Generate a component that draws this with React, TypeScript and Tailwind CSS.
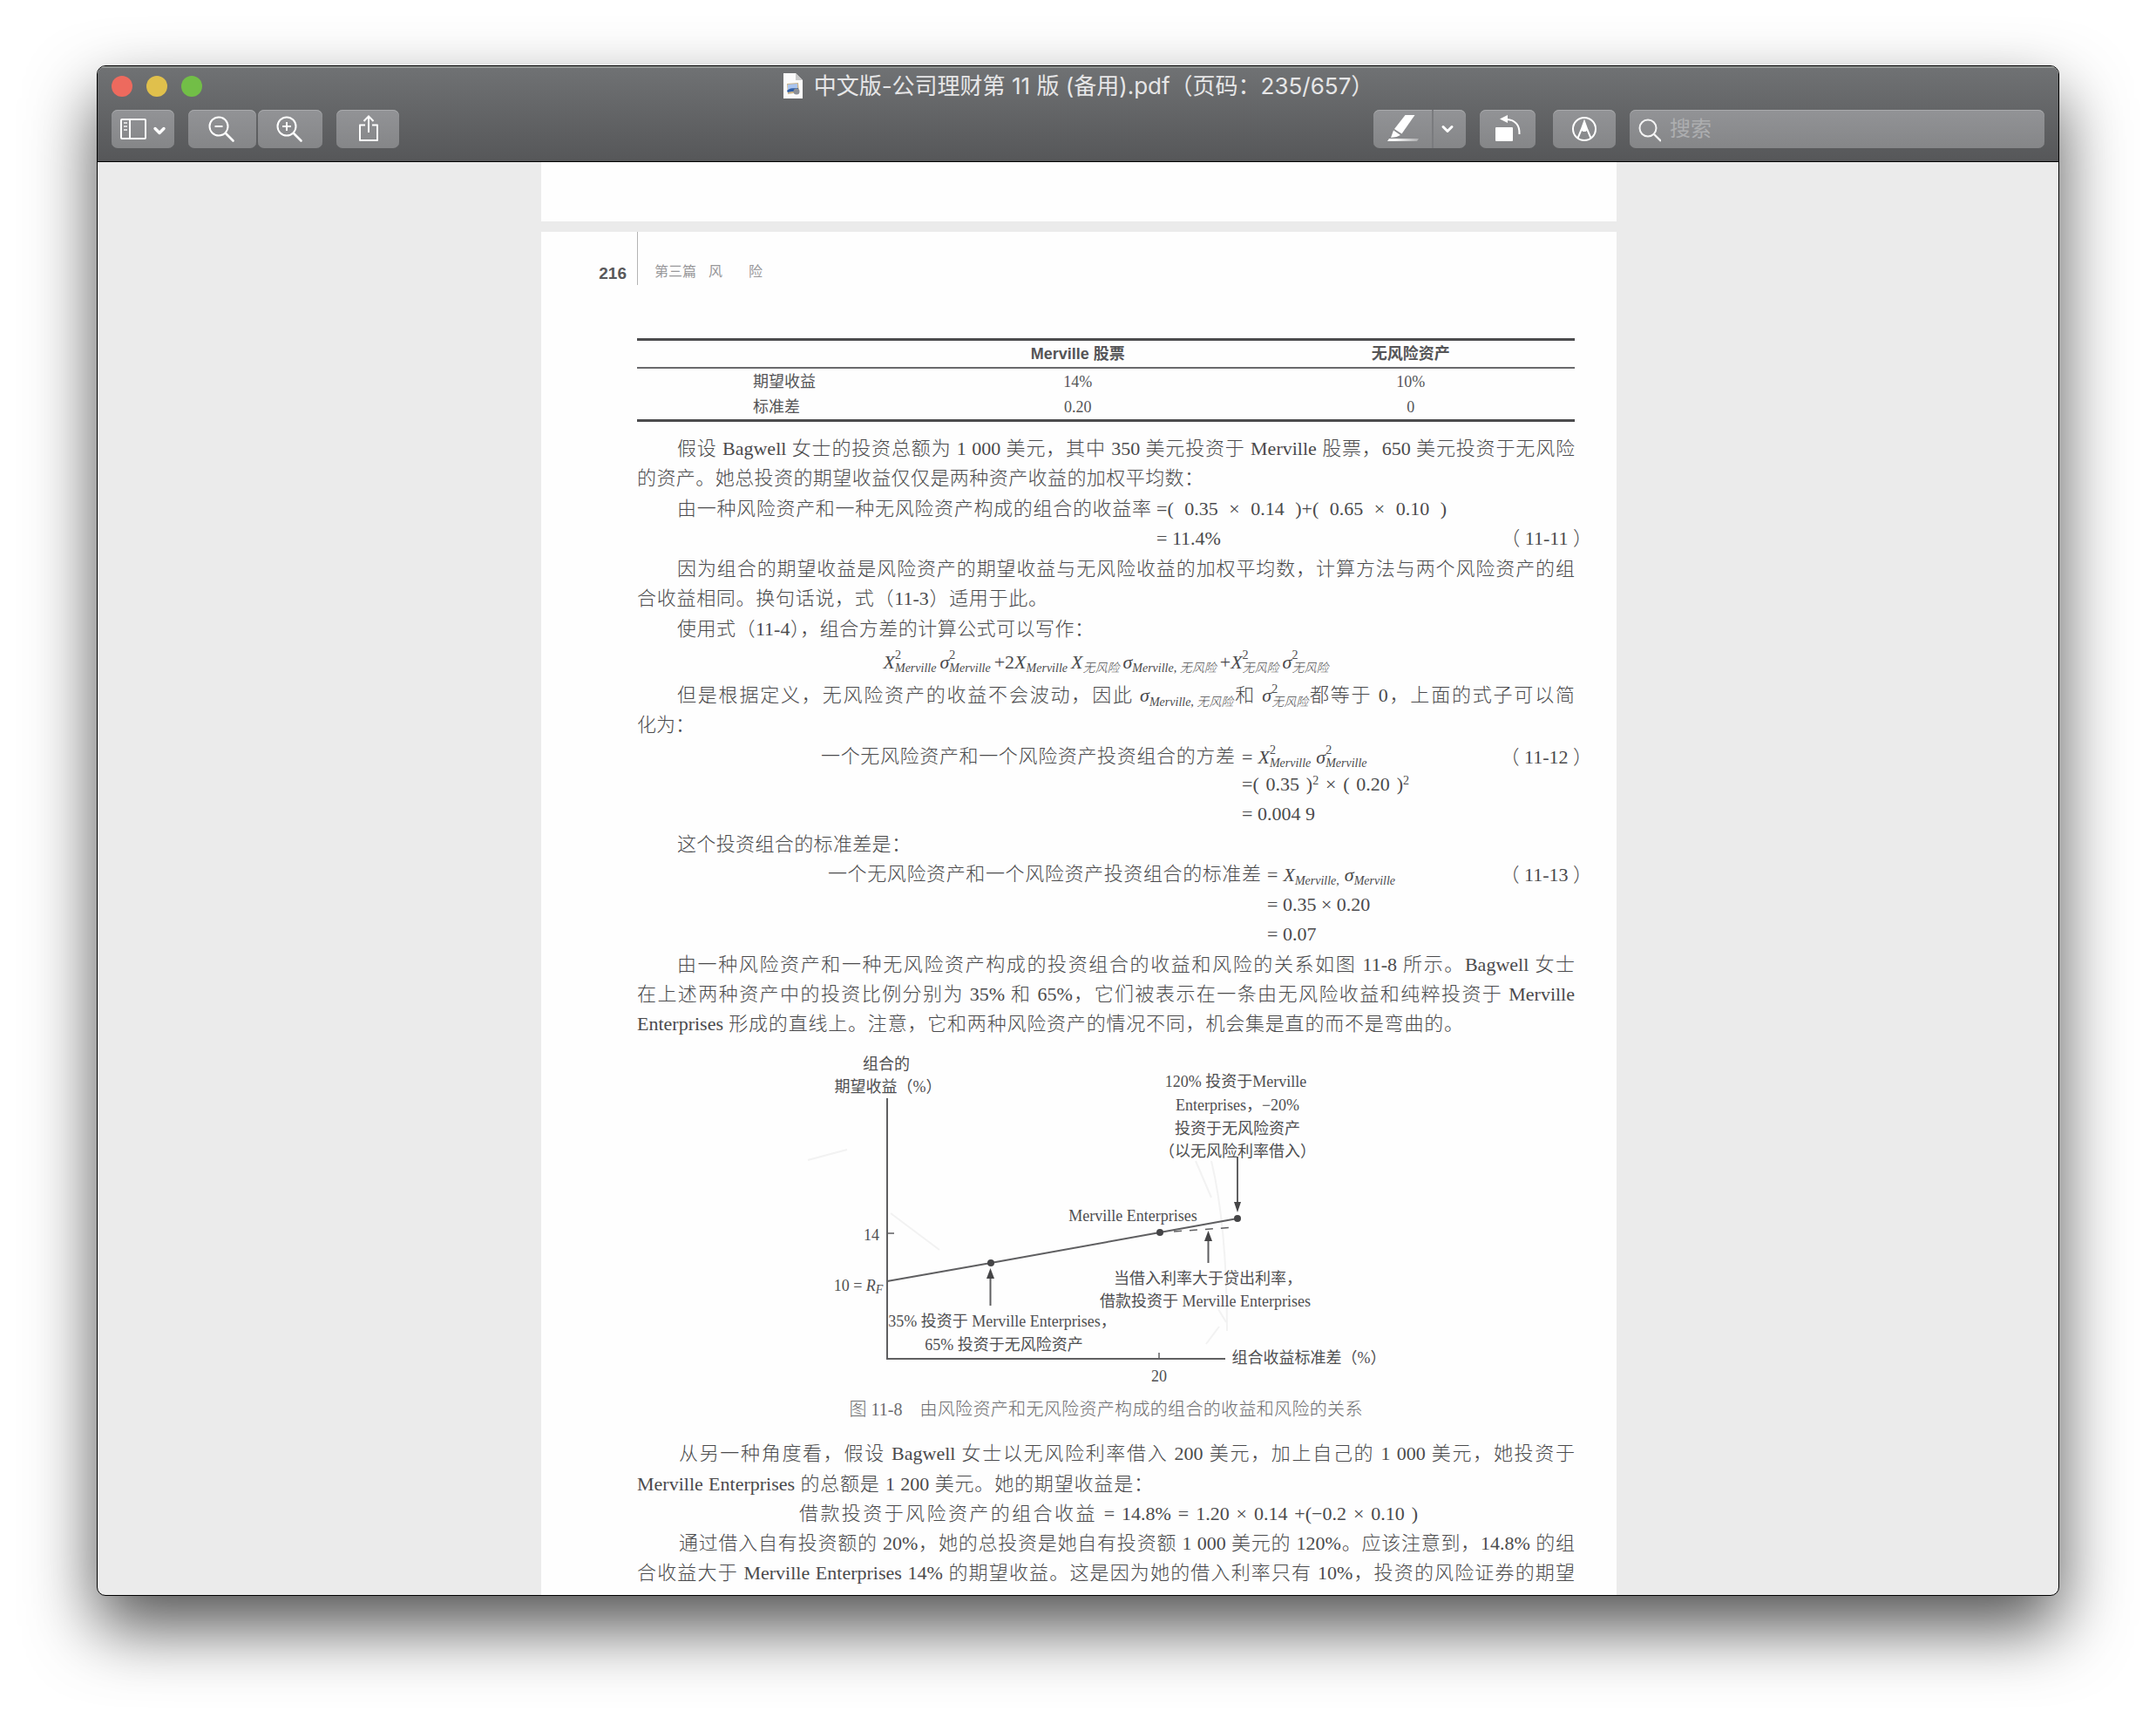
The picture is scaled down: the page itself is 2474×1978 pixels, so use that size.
import React from 'react';

const SERIF = "font-['Liberation_Serif','Noto_Sans_CJK_SC',serif]";
const SANS = "font-['Inter','Noto_Sans_CJK_SC',sans-serif]";
const BUTTON =
  'h-11 rounded-[7px] bg-linear-to-b from-[#929396] to-[#858688] shadow-[inset_0_1px_0_#a9aaac] flex shrink-0';

function Line({ children, className = '' }: { children: React.ReactNode; className?: string }) {
  return (
    <span className={`block h-[34px] leading-[34px] [text-align-last:justify] ${className}`}>{children}</span>
  );
}

function Sym({ base, sup = '', sub }: { base: string; sup?: string; sub: string }) {
  return (
    <span className="inline-flex items-center whitespace-nowrap">
      <i>{base}</i>
      <span className="flex flex-col text-left text-sm leading-[15px] [text-align-last:left]">
        <span className="h-[15px]">{sup}</span>
        <i className="h-[15px]">{sub}</i>
      </span>
    </span>
  );
}

function Toolbar() {
  return (
    <div className="flex items-center px-4 pb-[15px]">
      <button aria-label="边栏" className={`${BUTTON} w-[72px]`}>
        <svg width="72" height="44" fill="none" stroke="#fff" strokeWidth="2">
          <rect x="11" y="11" width="28" height="22" rx="1" />
          <path d="M21 11v22" />
          <path d="M14 15h4M14 19h4M14 23h4" strokeWidth="2" stroke="#dcdcdd" />
          <path d="M50 21.5l5 5 5-5" strokeWidth="3.4" strokeLinecap="round" strokeLinejoin="round" />
        </svg>
      </button>
      <div className="ml-4 flex gap-0.5">
        <button aria-label="缩小" className={`${BUTTON} w-[78px]`}>
          <svg width="78" height="44" fill="none" stroke="#fff" strokeWidth="2">
            <circle cx="35" cy="19" r="10.5" />
            <path d="M30.5 19h9" />
            <path d="M43 27l8.5 8.5" strokeWidth="2.6" strokeLinecap="round" />
          </svg>
        </button>
        <button aria-label="放大" className={`${BUTTON} w-[74px]`}>
          <svg width="74" height="44" fill="none" stroke="#fff" strokeWidth="2">
            <circle cx="33" cy="19" r="10.5" />
            <path d="M28 19h10M33 14v10" />
            <path d="M41 27l8.5 8.5" strokeWidth="2.6" strokeLinecap="round" />
          </svg>
        </button>
      </div>
      <button aria-label="共享" className={`${BUTTON} ml-4 w-[72px]`}>
        <svg width="72" height="44" fill="none" stroke="#fff" strokeWidth="2">
          <path d="M33 17.5h-6v17.5h20v-17.5h-6" strokeLinejoin="round" />
          <path d="M37 7.5v18.5" />
          <path d="M31.5 13l5.5-5.5 5.5 5.5" />
        </svg>
      </button>
      <div className="ml-auto flex">
        <button aria-label="高亮标记" className="flex h-11 w-[67px] rounded-l-[7px] bg-linear-to-b from-[#929396] to-[#858688] shadow-[inset_0_1px_0_#a9aaac]">
          <svg width="67" height="44">
            <defs>
              <linearGradient id="ink">
                <stop offset="0.2" stopColor="#fff" />
                <stop offset="1" stopColor="#fff" stopOpacity="0.3" />
              </linearGradient>
            </defs>
            <path d="M36.5 6H47.5L32.5 27.5L24 22Z" fill="#fff" />
            <path d="M23 23.5L31 29L26.5 31L20 32Z" fill="#fff" />
            <path d="M18 33H52L50 36H16Z" fill="url(#ink)" />
          </svg>
        </button>
        <button aria-label="高亮颜色" className="flex h-11 w-[39px] rounded-r-[7px] border-l-2 border-[#7a7b7e] bg-linear-to-b from-[#929396] to-[#858688] shadow-[inset_0_1px_0_#a9aaac]">
          <svg width="37" height="44" fill="none" stroke="#fff">
            <path d="M11 19.5l5 5 5-5" strokeWidth="3" strokeLinecap="round" strokeLinejoin="round" />
          </svg>
        </button>
      </div>
      <button aria-label="旋转" className={`${BUTTON} ml-4 w-16`}>
        <svg width="64" height="44" fill="#fff">
          <rect x="18" y="20" width="20" height="16" rx="1" />
          <path d="M23 10.5L32 6v9Z" />
          <path d="M31 11C41 11.500 46 18 45.500 28" fill="none" stroke="#fff" strokeWidth="2" />
        </svg>
      </button>
      <button aria-label="标记" className={`${BUTTON} ml-5 w-[72px]`}>
        <svg width="72" height="44" fill="none" stroke="#fff" strokeWidth="2">
          <circle cx="36" cy="22" r="13" />
          <path d="M28.500 32.500L32.500 23L36 13.500L39.500 23L43.500 32.500" />
          <path d="M36 14L39.500 23.500L37.500 25H34.500L32.500 23.500Z" fill="#fff" stroke="none" />
        </svg>
      </button>
      <label className={`${BUTTON} ml-4 w-[476px] items-center gap-2.5 pl-2`}>
        <svg width="28" height="44" fill="none" stroke="#f4f4f4" strokeWidth="2">
          <circle cx="13" cy="21" r="9.500" />
          <path d="M20 28l8 8" strokeWidth="2.400" />
        </svg>
        <input
          type="search"
          aria-label="搜索"
          placeholder="搜索"
          className="min-w-0 flex-1 bg-transparent text-2xl text-white outline-none placeholder:text-[#adaeb0]"
        />
      </label>
    </div>
  );
}

function TitleBar() {
  return (
    <div className="flex h-[50px] items-center px-4 pb-1">
      <div className="flex flex-1 gap-4">
        <button aria-label="关闭" className="size-6 rounded-full bg-[#ed6a5e]" />
        <button aria-label="最小化" className="size-6 rounded-full bg-[#e0c04c]" />
        <button aria-label="全屏" className="size-6 rounded-full bg-[#72be47]" />
      </div>
      <h1 className="flex items-center gap-3 text-[26px] leading-8 whitespace-nowrap text-[#e6e6e7]">
        <svg width="24" height="30" viewBox="0 0 24 30">
          <path d="M1 0H15L23 8V29H1Z" fill="#fbfbfb" />
          <path d="M15 0V8H23Z" fill="#c9c9c9" />
          <path d="M5 12L18 11L19 22L6 24Z" fill="#c9b48c" />
          <path d="M6 13L17 12V17L6 19Z" fill="#a9c4ee" />
          <path d="M5 20C9 16 14 18 18 17V20C14 22 10 20 6 22Z" fill="#2d5da8" />
          <circle cx="16" cy="21" r="3.500" fill="#8b8f96" />
        </svg>
        <span>中文版-公司理财第 11 版 (备用).pdf（页码：235/657）</span>
      </h1>
      <div className="flex-1" />
    </div>
  );
}

function AssetTable() {
  return (
    <table className="mt-[61px] w-full table-fixed border-collapse border-y-3 border-[#4c4c4e] text-lg text-[#555557]">
      <thead className="border-b-2 border-[#6a6a6c] font-['Liberation_Sans','Noto_Sans_CJK_SC',sans-serif]">
        <tr className="h-8 leading-6">
          <th className="w-[29%]" />
          <th className="w-[36%] p-0 font-semibold">Merville 股票</th>
          <th className="w-[35%] p-0 font-semibold">无风险资产</th>
        </tr>
      </thead>
      <tbody className="text-center font-normal">
        <tr className="h-[31px] leading-6">
          <th className="p-0 pl-[133px] text-left font-normal">期望收益</th>
          <td className="p-0">14%</td>
          <td className="p-0">10%</td>
        </tr>
        <tr className="h-[30px] leading-6">
          <th className="p-0 pl-[133px] text-left font-normal">标准差</th>
          <td className="p-0">0.20</td>
          <td className="p-0">0</td>
        </tr>
      </tbody>
    </table>
  );
}

function Chart() {
  return (
    <svg viewBox="731 1190 1076 400" className="block w-full text-lg font-normal" fill="#4f4f51">
      <g stroke="#f2f2f2" strokeWidth="2" fill="none">
        <path d="M1390 1330C1402 1380 1408 1440 1408 1525" />
        <path d="M1372 1330L1390 1372M1398 1500L1407 1515M1384 1540L1399 1520" />
        <path d="M1022 1390L1078 1432M972 1317L927 1329" />
      </g>
      <g stroke="#5f5f61" strokeWidth="2" fill="none">
        <path d="M1018 1258V1557H1406" />
        <path d="M1018 1413H1026M1330 1557V1550" strokeWidth="1.500" />
        <path d="M1018 1468L1137 1447L1331 1412L1420 1396" />
        <path d="M1347 1411L1418 1406" strokeDasharray="9 9" strokeWidth="1.500" />
        <path d="M1136.500 1496V1462M1386.500 1447V1420M1420 1325V1380" />
      </g>
      <g fill="#454547">
        <circle cx="1137" cy="1447" r="4" />
        <circle cx="1331" cy="1412" r="4" />
        <circle cx="1420" cy="1396" r="4" />
        <path d="M1136.500 1453L1141 1465H1132Z" />
        <path d="M1386.500 1410L1391 1422H1382Z" />
        <path d="M1420 1389L1424 1377H1416Z" />
      </g>
      <g textAnchor="middle">
        <text x="1017" y="1225">组合的</text>
        <text x="1019" y="1251">期望收益（%）</text>
        <text x="1000" y="1421">14</text>
        <text x="985" y="1479">
          10 = <tspan fontStyle="italic">R</tspan>
          <tspan fontStyle="italic" fontSize="14" dy="3">F</tspan>
        </text>
        <text x="1150" y="1520">35% 投资于 Merville Enterprises，</text>
        <text x="1152" y="1547">65% 投资于无风险资产</text>
        <text x="1418" y="1245">120% 投资于Merville</text>
        <text x="1420" y="1272">Enterprises，−20%</text>
        <text x="1420" y="1299">投资于无风险资产</text>
        <text x="1420" y="1325">（以无风险利率借入）</text>
        <text x="1300" y="1399">Merville Enterprises</text>
        <text x="1386" y="1471">当借入利率大于贷出利率，</text>
        <text x="1383" y="1497">借款投资于 Merville Enterprises</text>
        <text x="1502" y="1562">组合收益标准差（%）</text>
        <text x="1330" y="1583">20</text>
      </g>
    </svg>
  );
}

function BookPage() {
  return (
    <article className={`mx-auto w-[1234px] max-w-full grow bg-[#fefefe] pr-12 pl-[110px] text-[22px] font-light text-[#4a4a4c] ${SERIF}`}>
      <header className="-ml-12 flex h-[61px] items-start">
        <span className="w-12 pt-9 pr-3 text-right font-['Liberation_Sans'] text-[19px] leading-6 font-bold text-[#58585a]">216</span>
        <span className="flex h-full gap-3.5 border-l border-[#b4b4b4] pt-[34px] pl-[19px] text-base leading-6 font-normal text-[#98989a]">
          <span>第三篇</span>
          <span className="mr-4">风</span>
          <span>险</span>
        </span>
      </header>

      <AssetTable />

      <p className="mt-3.5">
        <Line className="pl-[46px]">假设 Bagwell 女士的投资总额为 1 000 美元，其中 350 美元投资于 Merville 股票，650 美元投资于无风险</Line>
        <Line className="w-[650px]">的资产。她总投资的期望收益仅仅是两种资产收益的加权平均数：</Line>
      </p>
      <div className="mt-px">
        <div className="flex pl-[46px]">
          <Line className="w-[544px]">由一种风险资产和一种无风险资产构成的组合的收益率</Line>
          <Line className="ml-1.5 w-[333px]">=( 0.35 × 0.14 )+( 0.65 × 0.10 )</Line>
        </div>
        <div className="-mr-5 flex h-[34px] justify-between pl-[596px] leading-[34px]">
          <span>= 11.4%</span>
          <span>（ 11-11 ）</span>
        </div>
      </div>
      <p className="mt-px">
        <Line className="pl-[46px]">因为组合的期望收益是风险资产的期望收益与无风险收益的加权平均数，计算方法与两个风险资产的组</Line>
        <Line className="w-[471px]">合收益相同。换句话说，式（11-3）适用于此。</Line>
      </p>
      <p className="mt-px">
        <Line className="ml-[46px] w-[478px]">使用式（11-4），组合方差的计算公式可以写作：</Line>
      </p>
      <div className="flex h-10 items-center justify-center gap-1">
        <Sym base="X" sup="2" sub="Merville" />
        <Sym base="σ" sup="2" sub="Merville" />
        <span>+2<Sym base="X" sub="Merville" /></span>
        <Sym base="X" sub="无风险" />
        <Sym base="σ" sub="Merville, 无风险" />
        <span>+<Sym base="X" sup="2" sub="无风险" /></span>
        <Sym base="σ" sup="2" sub="无风险" />
      </div>
      <p className="mt-0.5">
        <Line className="pl-[46px]">
          但是根据定义，无风险资产的收益不会波动，因此 <Sym base="σ" sub="Merville, 无风险" />和 <Sym base="σ" sup="2" sub="无风险" />都等于 0，上面的式子可以简
        </Line>
        <span className="block h-[34px] leading-[34px]">化为：</span>
      </p>
      <div className="mt-0.5 pl-[211px]">
        <div className="-mr-5 flex h-[34px] items-center">
          <Line className="w-[475px]">一个无风险资产和一个风险资产投资组合的方差</Line>
          <span className="ml-2 flex items-center gap-1.5">
            = <Sym base="X" sup="2" sub="Merville" />
            <Sym base="σ" sup="2" sub="Merville" />
          </span>
          <span className="ml-auto">（ 11-12 ）</span>
        </div>
        <div className="ml-[483px] h-8 w-[192px] leading-[30px] [text-align-last:justify]">
          =( 0.35 )<sup className="text-sm leading-none">2</sup> × ( 0.20 )<sup className="text-sm leading-none">2</sup>
        </div>
        <div className="ml-[483px] leading-[34px]">= 0.004 9</div>
      </div>
      <p className="mt-px">
        <Line className="ml-[46px] w-[268px]">这个投资组合的标准差是：</Line>
      </p>
      <div className="pl-[219px]">
        <div className="-mr-5 flex h-[34px] items-center">
          <Line className="w-[497px]">一个无风险资产和一个风险资产投资组合的标准差</Line>
          <span className="ml-[7px] flex items-center gap-1.5">
            = <Sym base="X" sub="Merville," />
            <Sym base="σ" sub="Merville" />
          </span>
          <span className="ml-auto">（ 11-13 ）</span>
        </div>
        <div className="mt-px ml-[504px] leading-[34px]">= 0.35 × 0.20</div>
        <div className="ml-[504px] leading-[34px]">= 0.07</div>
      </div>
      <p className="mt-px">
        <Line className="pl-[46px]">由一种风险资产和一种无风险资产构成的投资组合的收益和风险的关系如图 11-8 所示。Bagwell 女士</Line>
        <Line>在上述两种资产中的投资比例分别为 35% 和 65%，它们被表示在一条由无风险收益和纯粹投资于 Merville</Line>
        <Line className="w-[948px]">Enterprises 形成的直线上。注意，它和两种风险资产的情况不同，机会集是直的而不是弯曲的。</Line>
      </p>

      <figure>
        <Chart />
        <figcaption className="flex h-[50px] items-center justify-center gap-5 text-xl text-[#6c6c6e]">
          <span>图 11-8</span>
          <span className="w-[508px] [text-align-last:justify]">由风险资产和无风险资产构成的组合的收益和风险的关系</span>
        </figcaption>
      </figure>

      <p className="mt-[9px]">
        <Line className="pl-12">从另一种角度看，假设 Bagwell 女士以无风险利率借入 200 美元，加上自己的 1 000 美元，她投资于</Line>
        <Line className="mt-px w-[592px]">Merville Enterprises 的总额是 1 200 美元。她的期望收益是：</Line>
      </p>
      <p>
        <Line className="ml-[186px] w-[710px]">借款投资于风险资产的组合收益 = 14.8% = 1.20 × 0.14 +(−0.2 × 0.10 )</Line>
      </p>
      <p>
        <Line className="pl-12">通过借入自有投资额的 20%，她的总投资是她自有投资额 1 000 美元的 120%。应该注意到，14.8% 的组</Line>
        <Line>合收益大于 Merville Enterprises 14% 的期望收益。这是因为她的借入利率只有 10%，投资的风险证券的期望</Line>
      </p>
    </article>
  );
}

export default function App() {
  return (
    <div lang="zh-CN" className={`h-screen overflow-hidden bg-white px-[111px] pt-[75px] pb-[147px] ${SANS}`}>
      <section className="flex h-full flex-col overflow-hidden rounded-[10px] border border-black bg-[#ebebeb] shadow-[0_36px_78px_rgba(0,0,0,0.68)]">
        <header className="shrink-0 border-b border-black bg-linear-to-b from-[#707274] to-[#565759] shadow-[inset_0_2px_0_#929593]">
          <TitleBar />
          <Toolbar />
        </header>
        <main className="flex min-h-0 flex-1 flex-col overflow-hidden pl-0.5">
          <div className="mx-auto mb-3 h-[68px] w-[1234px] max-w-full shrink-0 bg-[#fefefe]" />
          <BookPage />
        </main>
      </section>
    </div>
  );
}
